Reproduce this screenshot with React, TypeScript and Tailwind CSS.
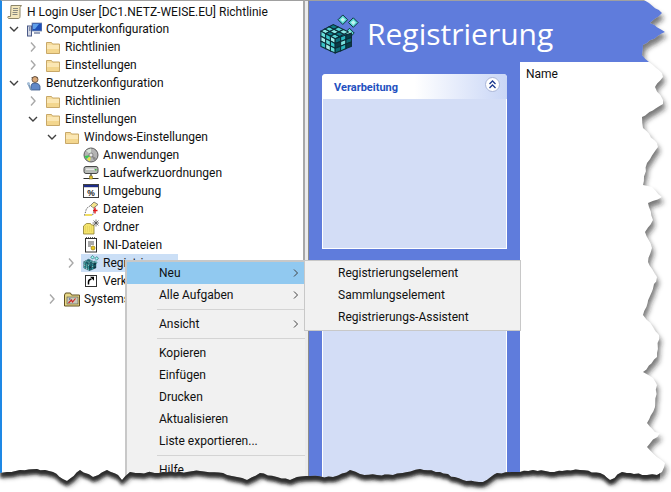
import React from "react";

const EDGE: [number, number][] = [
  [0,0],[644,0],[649,3],[662,13],[650,23],[665,32],[643,45],[642,55],[649,62],[662,73],[663,77],[655,87],[663,100],[663,104],[642,117],[643,128],[657,143],[658,147],[647,163],[643,185],[652,187],[662,197],[648,203],[653,220],[645,232],[652,248],[648,262],[657,277],[650,296],[643,315],[653,327],[659,335],[657,357],[643,372],[653,378],[657,385],[655,407],[647,423],[655,432],[660,433],[647,447],[657,457],[665,463],[662,472],
  [657,475],[647,475],[622,472],[610,480],[600,473],[580,470],[550,472],[533,470],[520,472],[497,473],[483,482],[463,480],[440,472],[420,469],[393,475],[377,475],[360,474],[350,470],[333,477],[310,476],[297,477],[290,480],[277,477],[260,473],[247,480],[237,477],[223,473],[200,471],[187,472],[163,472],[140,473],[130,472],[122,480],[118,475],[107,470],[93,477],[80,470],[67,481],[53,472],[37,469],[20,470],[7,472],[0,473],
];

function jagged(): string {
  const out: string[] = [];
  let seed = 7;
  const rnd = () => { seed = (seed * 16807) % 2147483647; return (seed % 1000) / 1000 - 0.5; };
  EDGE.forEach((p, i) => {
    const q = EDGE[(i + 1) % EDGE.length];
    out.push(`${p[0]},${p[1]}`);
    const len = Math.hypot(q[0] - p[0], q[1] - p[1]);
    if (i === 0 || i >= EDGE.length - 1 || p[0] === 0) return;
    const steps = Math.floor(len / 4);
    for (let s = 1; s < steps; s++) {
      const t = s / steps;
      out.push(`${(p[0] + (q[0] - p[0]) * t + rnd() * 1.6).toFixed(1)},${(p[1] + (q[1] - p[1]) * t + rnd() * 1.6).toFixed(1)}`);
    }
  });
  return "M" + out.join(" L") + " Z";
}

function TornEdge() {
  const d = jagged();
  return (
    <svg className="absolute left-0 top-0 pointer-events-none" width="671" height="492" viewBox="0 0 671 492">
      <defs>
        <filter id="blurS" x="-5%" y="-5%" width="110%" height="110%"><feGaussianBlur stdDeviation="2.4" /></filter>
        <filter id="blurB" x="-5%" y="-5%" width="110%" height="110%"><feGaussianBlur stdDeviation="1.6" /></filter>
        <clipPath id="outside"><path clipRule="evenodd" d={`M0,0H671V492H0Z ${d}`} /></clipPath>
        <clipPath id="bottomBand"><rect x="0" y="464" width="660" height="28" /></clipPath>
      </defs>
      <path fillRule="evenodd" fill="#fff" d={`M0,0H671V492H0Z ${d}`} />
      <g clipPath="url(#outside)">
        <path d={d} fill="#222" fillOpacity="0.6" filter="url(#blurS)" transform="translate(2,5)" />
        <g clipPath="url(#bottomBand)">
          <path d={d} fill="#111" fillOpacity="0.75" filter="url(#blurB)" transform="translate(0,5)" />
        </g>
      </g>
    </svg>
  );
}

function Chevron({ kind }: { kind: "open" | "closed" | "none" }) {
  if (kind === "none") return <span className="w-[14px] shrink-0" />;
  return (
    <svg width="14" height="14" viewBox="0 0 14 14" className="shrink-0">
      {kind === "open" ? (
        <path d="M3 5l4 4 4-4" fill="none" stroke="#404040" strokeWidth="1.4" />
      ) : (
        <path d="M5 2.5l4 4.5-4 4.5" fill="none" stroke="#a8a8a8" strokeWidth="1.4" />
      )}
    </svg>
  );
}

const Ico = ({ children }: { children: React.ReactNode }) => (
  <svg width="16" height="16" viewBox="0 0 16 16" className="shrink-0">{children}</svg>
);

const FolderI = () => (
  <Ico>
    <path d="M1.500 3.500h5l1 1.500h7v9.500h-13z" fill="#f6dc9c" stroke="#c8a868" strokeWidth="1" />
    <rect x="2" y="6" width="12" height="8" fill="#fbe7b4" />
    <rect x="2" y="10" width="12" height="4" fill="#f3d68e" />
  </Ico>
);
const ScrollI = () => (
  <Ico>
    <path d="M4 1.500h10.500l-1.500 2v9c0 1.500-1 2-2 2h-9c-1 0-1.500-1-1-2h2.500z" fill="#f3e7bd" stroke="#8e8668" strokeWidth="1" />
    <path d="M6 4.500h5M6 6.500h5M5.500 8.500h5M5.500 10.500h5" stroke="#8a8a80" strokeWidth="1" />
  </Ico>
);
const ComputerI = () => (
  <Ico>
    <rect x="6" y="2" width="10" height="8" fill="#1d4fb8" stroke="#7a8aa8" strokeWidth="0.8" />
    <path d="M7 3h6l-4 5H7z" fill="#5fa0ea" />
    <rect x="1.500" y="5" width="4" height="10" fill="#d4d8e4" stroke="#4a5a88" strokeWidth="1" />
    <rect x="8" y="11" width="6" height="2" fill="#9aa4bc" />
    <path d="M3 7h1.500M3 9h1.500" stroke="#344878" />
  </Ico>
);
const UserI = () => (
  <Ico>
    <circle cx="9" cy="4.500" r="3" fill="#d9a878" stroke="#544030" strokeWidth="0.8" />
    <path d="M5 3.500q4-3.500 7 0l-1-1.500h-5z" fill="#40342a" />
    <path d="M5 15v-4q0-3 4-3t5 3v4z" fill="#6088c8" stroke="#3a5888" strokeWidth="0.8" />
    <path d="M2 8l3 7" stroke="#7a98b8" strokeWidth="1.800" />
    <circle cx="2.500" cy="8.500" r="1.500" fill="#a8c0d8" />
  </Ico>
);
const CdI = () => (
  <Ico>
    <circle cx="8" cy="8" r="7" fill="#b4b4b4" stroke="#5c5c5c" strokeWidth="1" />
    <path d="M8 8L3 3.500 8 1.500z" fill="#d8e4d8" />
    <path d="M8 8L3 12l-1.500-3z" fill="#3ac850" />
    <path d="M8 8L4 12.500l3 2z" fill="#e8e848" />
    <path d="M8 8l5 3-2 2.500z" fill="#888" />
    <circle cx="8" cy="8" r="2" fill="#e8e8e8" stroke="#666" strokeWidth="0.7" />
  </Ico>
);
const DriveI = () => (
  <Ico>
    <rect x="1" y="1.500" width="14" height="7" rx="2" fill="#b8bcb8" stroke="#484848" strokeWidth="1" />
    <rect x="3" y="3.500" width="8" height="1.500" fill="#e8e8e8" />
    <rect x="12" y="4" width="1.500" height="1.500" fill="#40c040" />
    <path d="M8 9v4M0.500 13.500h15" stroke="#303030" strokeWidth="1.200" />
    <rect x="6.500" y="11" width="3" height="3" fill="#e0c030" stroke="#706010" strokeWidth="0.5" />
  </Ico>
);
const EnvI = () => (
  <Ico>
    <rect x="0.500" y="1.500" width="15" height="13" fill="#fff" stroke="#404040" strokeWidth="1" />
    <rect x="1" y="2" width="14" height="2" fill="#1c2c88" />
    <rect x="1" y="4" width="14" height="1" fill="#d0d0d0" />
    <text x="8" y="13" fontSize="8.500" fontWeight="700" textAnchor="middle" fill="#202020" fontFamily="Liberation Sans">%</text>
  </Ico>
);
const FilesI = () => (
  <Ico>
    <path d="M7 5L11 1l4 2.500-5 4z" fill="#f4e48a" stroke="#555" strokeWidth="0.7" />
    <path d="M1.500 14.500l2-7 4-3 4 3.500-2 6.500z" fill="#fff" stroke="#444" strokeWidth="0.8" strokeDasharray="1.500 1" />
    <path d="M12 6.500v6M10 9.500h4.500" stroke="#e01818" strokeWidth="1.400" />
    <rect x="2" y="13" width="7" height="2" fill="#f0dc60" />
  </Ico>
);
const NewFolderI = () => (
  <Ico>
    <path d="M0.500 7l3-2.500h4l1 1.500H11v9H0.500z" fill="#f4e46c" stroke="#8c7c30" strokeWidth="0.8" />
    <path d="M2 8h8M2 10h8M2 12h8" stroke="#d8c050" strokeWidth="0.8" strokeDasharray="1 1" />
    <path d="M13 0.500v7M9.500 4h7M10.500 1.500l5 5M15.500 1.500l-5 5" stroke="#404040" strokeWidth="0.7" />
  </Ico>
);
const IniI = () => (
  <Ico>
    <rect x="2.500" y="1.500" width="11" height="13.500" fill="#fff" stroke="#303030" strokeWidth="1" />
    <path d="M3 1h10" stroke="#303030" strokeWidth="1.600" strokeDasharray="1 1" />
    <path d="M5 5h6M5 7h6M5 9h3" stroke="#505050" strokeWidth="1" />
    <circle cx="10" cy="11" r="2" fill="#e8c820" stroke="#806800" strokeWidth="0.6" />
  </Ico>
);
const ShortcutI = () => (
  <Ico>
    <rect x="2.500" y="2.500" width="11" height="11" fill="#fff" stroke="#303030" strokeWidth="1" />
    <path d="M5.500 11.500V9q0-2.500 3-3" fill="none" stroke="#000" strokeWidth="1.500" />
    <path d="M7 3.800h4v4z" fill="#000" />
  </Ico>
);
const PanelI = () => (
  <Ico>
    <path d="M0.500 4l1-2h5l1 2h8v11H0.500z" fill="#e8d888" stroke="#605020" strokeWidth="1" />
    <rect x="3" y="6" width="11" height="7" fill="#c8c8b8" stroke="#505040" strokeWidth="0.6" />
    <path d="M4.500 12l3-3 1 2 3-3.500" stroke="#d02020" strokeWidth="1.100" fill="none" />
    <path d="M5 8h1.500" stroke="#2040a0" strokeWidth="1" />
  </Ico>
);

type P = [number, number];
function Face({ a, b, c, d, n, tones }: { a: P; b: P; c: P; d: P; n: number; tones: string[] }) {
  const at = (u: number, v: number): string => {
    const x = a[0] * (1 - u) * (1 - v) + b[0] * u * (1 - v) + c[0] * u * v + d[0] * (1 - u) * v;
    const y = a[1] * (1 - u) * (1 - v) + b[1] * u * (1 - v) + c[1] * u * v + d[1] * (1 - u) * v;
    return `${x.toFixed(1)},${y.toFixed(1)}`;
  };
  const tiles: React.ReactNode[] = [];
  for (let i = 0; i < n; i++) {
    for (let j = 0; j < n; j++) {
      tiles.push(
        <polygon
          key={`${i}-${j}`}
          points={[at(i / n, j / n), at((i + 1) / n, j / n), at((i + 1) / n, (j + 1) / n), at(i / n, (j + 1) / n)].join(" ")}
          fill={tones[(i + j * 2) % tones.length]}
          stroke="#0a2c36"
          strokeWidth="1.100"
        />,
      );
    }
  }
  return <g>{tiles}</g>;
}
function Diamond({ x, y, r }: { x: number; y: number; r: number }) {
  return (
    <g>
      <polygon points={`${x - r},${y} ${x},${y - r} ${x + r},${y} ${x},${y + r}`} fill="#58d8d4" stroke="#0a2c36" strokeWidth="1" />
      <polygon points={`${x - r * 0.5},${y} ${x},${y - r * 0.5} ${x + r * 0.5},${y} ${x},${y + r * 0.5}`} fill="#c0f4f0" />
    </g>
  );
}
function RegIcon({ size }: { size: number }) {
  return (
    <svg width={size} height={size} viewBox="0 0 40 42" className="shrink-0">
      <Diamond x={24} y={6} r={5} />
      <Diamond x={35} y={9} r={5} />
      <Diamond x={31} y={20} r={5} />
      <Face a={[1, 18]} b={[14, 11]} c={[30, 19]} d={[16, 26]} n={3} tones={["#8ce8e4", "#58d4d4", "#0e7c88"]} />
      <Face a={[1, 18]} b={[16, 26]} c={[16, 41]} d={[1, 34]} n={3} tones={["#66dcd8", "#38c4c8", "#a4ece8"]} />
      <Face a={[16, 26]} b={[33, 20]} c={[33, 34]} d={[16, 41]} n={3} tones={["#0e6c78", "#2ab4bc", "#0a3c48", "#7ce0dc"]} />
    </svg>
  );
}

type Row = { label: string; pl: string; chev: "open" | "closed" | "none"; icon: React.ReactNode; sel?: boolean };
const ROWS: Row[] = [
  { label: "Computerkonfiguration", pl: "pl-[5px]", chev: "open", icon: <ComputerI /> },
  { label: "Richtlinien", pl: "pl-[24px]", chev: "closed", icon: <FolderI /> },
  { label: "Einstellungen", pl: "pl-[24px]", chev: "closed", icon: <FolderI /> },
  { label: "Benutzerkonfiguration", pl: "pl-[5px]", chev: "open", icon: <UserI /> },
  { label: "Richtlinien", pl: "pl-[24px]", chev: "closed", icon: <FolderI /> },
  { label: "Einstellungen", pl: "pl-[24px]", chev: "open", icon: <FolderI /> },
  { label: "Windows-Einstellungen", pl: "pl-[43px]", chev: "open", icon: <FolderI /> },
  { label: "Anwendungen", pl: "pl-[62px]", chev: "none", icon: <CdI /> },
  { label: "Laufwerkzuordnungen", pl: "pl-[62px]", chev: "none", icon: <DriveI /> },
  { label: "Umgebung", pl: "pl-[62px]", chev: "none", icon: <EnvI /> },
  { label: "Dateien", pl: "pl-[62px]", chev: "none", icon: <FilesI /> },
  { label: "Ordner", pl: "pl-[62px]", chev: "none", icon: <NewFolderI /> },
  { label: "INI-Dateien", pl: "pl-[62px]", chev: "none", icon: <IniI /> },
  { label: "Registrierung", pl: "pl-[62px]", chev: "closed", icon: <RegIcon size={16} />, sel: true },
  { label: "Verknüpfungen", pl: "pl-[62px]", chev: "none", icon: <ShortcutI /> },
  { label: "Systemsteuerungseinstellungen", pl: "pl-[43px]", chev: "closed", icon: <PanelI /> },
];

function TreeRow({ r }: { r: Row }) {
  return (
    <div className={`flex h-[18px] items-center whitespace-nowrap ${r.pl}`}>
      <Chevron kind={r.chev} />
      <div className={`ml-[3px] flex h-[18px] items-center gap-[4px] pl-[2px] pr-[4px] ${r.sel ? "bg-[#cbdff6]" : ""}`}>
        {r.icon}
        <span>{r.label}</span>
      </div>
    </div>
  );
}

const MenuChevron = () => (
  <svg width="6" height="8" viewBox="0 0 6 8"><path d="M1 0.500L4.500 4 1 7.500" fill="none" stroke="#404040" strokeWidth="1" /></svg>
);

function MenuItem({ label, arrow, active }: { label: string; arrow?: boolean; active?: boolean }) {
  return (
    <div className={`flex h-[22px] items-center justify-between pl-[32px] pr-[6px] ${active ? "bg-[#91c9f0]" : ""}`}>
      <span>{label}</span>
      {arrow && <MenuChevron />}
    </div>
  );
}
const Sep = () => <div className="my-[3px] ml-[30px] h-px bg-[#d4d4d4]" />;

export default function App() {
  return (
    <div className="relative h-[492px] w-[671px] overflow-hidden bg-white font-['Roboto','Noto_Sans',sans-serif] text-[12px] leading-[18px] text-[#101010]">
      <div className="flex h-full">
        <div className="h-full w-[305px] shrink-0 overflow-hidden border-l-2 border-r-2 border-t border-l-[#1e88e5] border-r-[#a8a8a8] border-t-[#a0a0a0] bg-white pt-[1px]">
          <div className="flex h-[18px] items-center gap-[4px] pl-[5px] pt-[1px] whitespace-nowrap">
            <ScrollI />
            <span>H Login User [DC1.NETZ-WEISE.EU] Richtlinie</span>
          </div>
          {ROWS.map((r, i) => <TreeRow key={i} r={r} />)}
        </div>
        <div className="h-full w-[4px] shrink-0 border-t border-r border-t-[#a0a0a0] border-r-[#8c8c8c] bg-[#ececec]" />
        <div className="flex h-full flex-1 flex-col border-t border-t-[#a0a0a0] bg-[#5f7cdc]">
          <div className="flex h-[61px] shrink-0 items-center pl-[10px] pt-[4px]">
            <RegIcon size={40} />
            <span className="ml-[8px] font-['Open_Sans',sans-serif] text-[30px] font-normal leading-none text-white">Registrierung</span>
          </div>
          <div className="flex flex-1">
            <div className="ml-[13px] mt-[12px] w-[185px] shrink-0">
              <div className="h-[175px] rounded-t-[4px] border-x border-b border-white bg-[#d3ddf6]">
                <div className="-mx-px flex h-[25px] items-center justify-between rounded-t-[4px] bg-gradient-to-r from-white from-50% to-[#c9d6f6] pl-[12px] pr-[7px] pt-[2px]">
                  <span className="text-[11px] font-bold text-[#2350c0]">Verarbeitung</span>
                  <span className="-mt-[6px] flex h-[15px] w-[15px] items-center justify-center rounded-full border border-[#aab6d8] bg-white">
                    <svg width="9" height="9" viewBox="0 0 9 9"><path d="M1.500 4L4.500 1 7.500 4M1.500 8L4.500 5 7.500 8" fill="none" stroke="#1c3a90" strokeWidth="1.300" /></svg>
                  </span>
                </div>
              </div>
              <div className="mt-[15px] h-[300px] border-x border-white bg-[#d3ddf6]" />
            </div>
            <div className="ml-[13px] flex-1 bg-white pl-[6px] pt-[3px]">Name</div>
          </div>
        </div>
      </div>

      <div className="absolute left-[125px] top-[260px] h-[230px] w-[180px] border-2 border-r-0 border-[#c8c8c8] bg-[#f1f1f1]">
        <MenuItem label="Neu" arrow active />
        <MenuItem label="Alle Aufgaben" arrow />
        <Sep />
        <MenuItem label="Ansicht" arrow />
        <Sep />
        <MenuItem label="Kopieren" />
        <MenuItem label="Einfügen" />
        <MenuItem label="Drucken" />
        <MenuItem label="Aktualisieren" />
        <MenuItem label="Liste exportieren..." />
        <Sep />
        <MenuItem label="Hilfe" />
      </div>
      <div className="absolute left-[304px] top-[260px] h-[71px] w-[217px] border border-[#c8c8c8] bg-[#f1f1f1] py-[1px]">
        {["Registrierungselement", "Sammlungselement", "Registrierungs-Assistent"].map((t) => (
          <div key={t} className="flex h-[22px] items-center pl-[33px]">{t}</div>
        ))}
      </div>
      <TornEdge />
    </div>
  );
}
